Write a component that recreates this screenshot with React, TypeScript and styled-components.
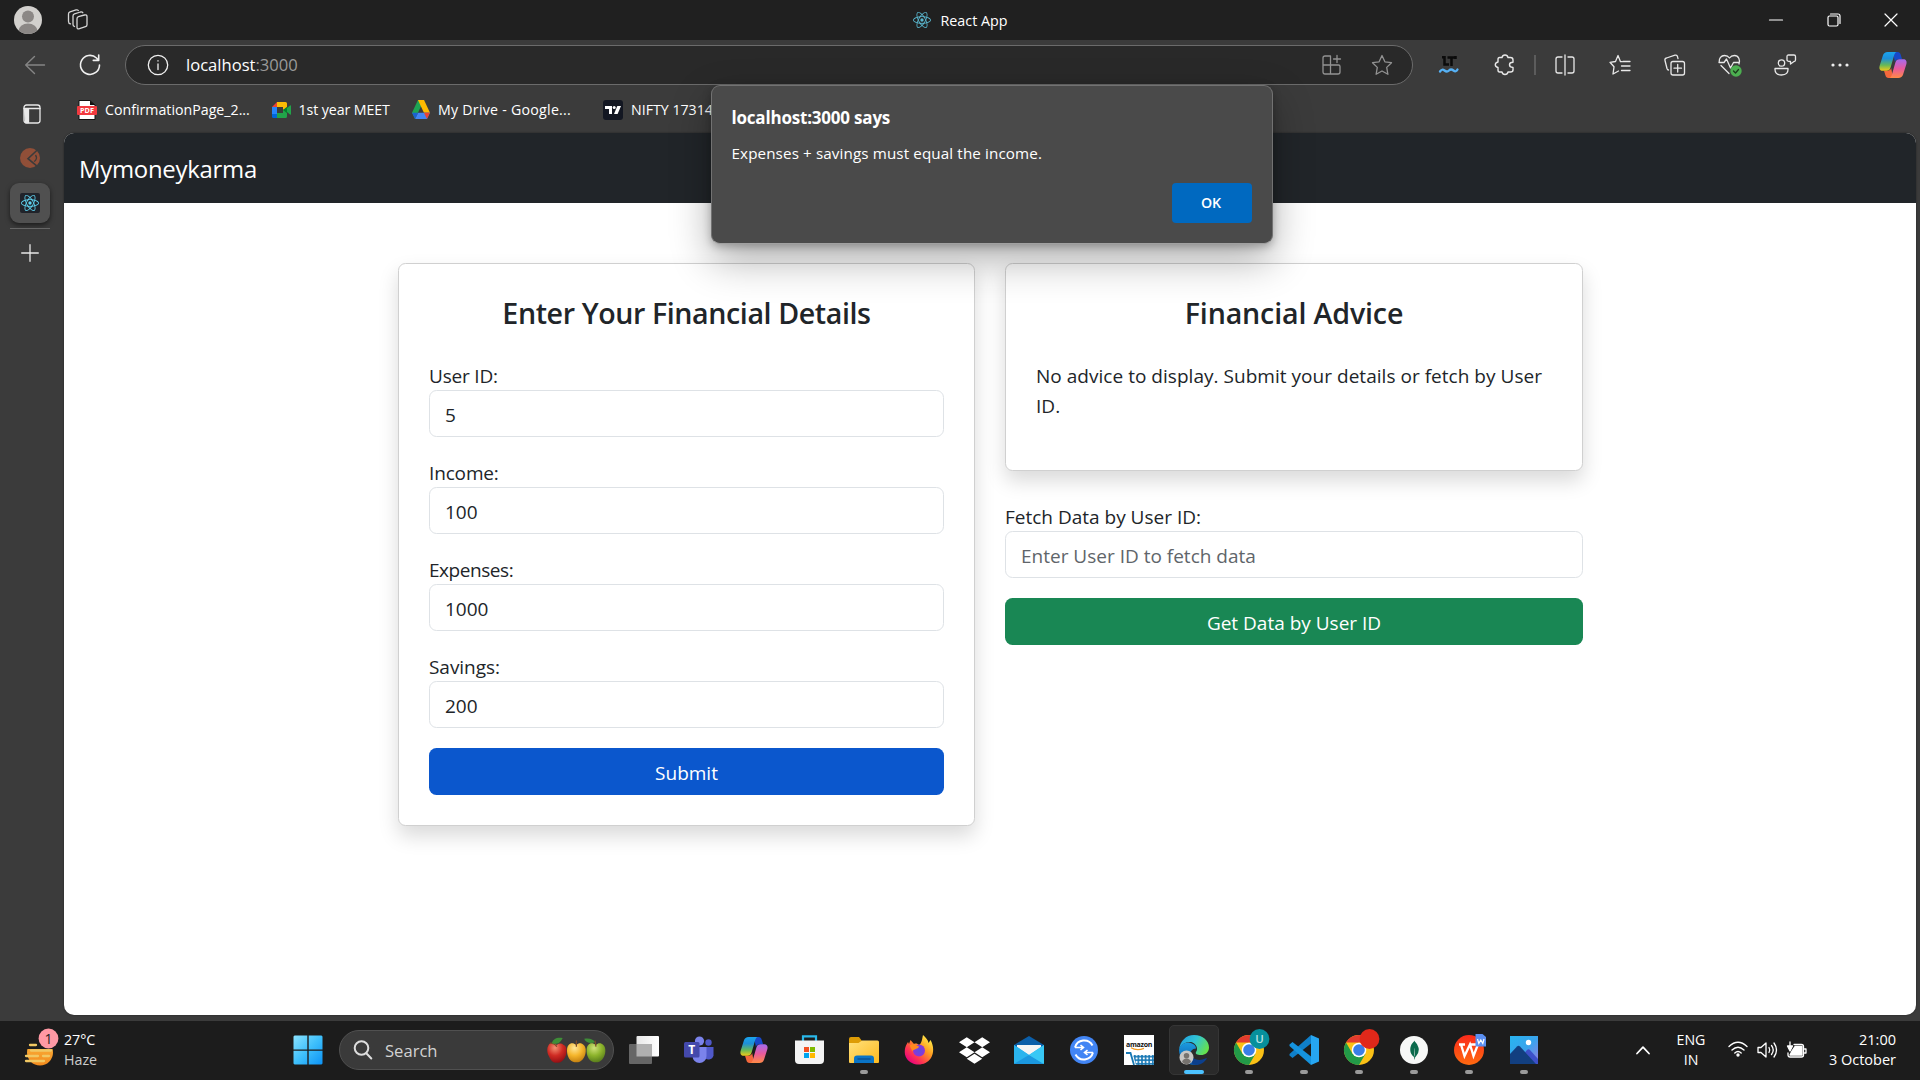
import React from "react";
import styled, { createGlobalStyle } from "styled-components";
import { SiReact, SiMongodb } from "react-icons/si";
import { FaDropbox } from "react-icons/fa";

const Global = createGlobalStyle`
  *, *::before, *::after { box-sizing: border-box; }
  html, body { margin: 0; padding: 0; overflow: hidden; background: #1c1c1c; }
  body { font-family: "Open Sans", "Noto Sans", sans-serif; color: #fff; }
  svg { display: block; flex: none; overflow: visible; }
  input, button { font-family: inherit; }
`;

/* ---------- window chrome ---------- */
const Screen = styled.div`
  width: 1920px; height: 1080px; display: flex; flex-direction: column; overflow: hidden;
`;
const Window = styled.div`
  position: relative; height: 1021px; display: flex; flex-direction: column; background: #3b3b3b;
`;
const TitleBar = styled.header`
  height: 40px; background: #202020; display: grid; grid-template-columns: 1fr auto 1fr; align-items: center;
`;
const TitleLeft = styled.div`display: flex; align-items: center; gap: 25px; padding-left: 14px;`;
const TabTitle = styled.div`
  display: flex; align-items: center; gap: 10px; font-size: 14.3px;
`;
const WindowButtons = styled.div`display: flex; justify-content: flex-end;`;
const WindowButton = styled.div`
  width: 57.5px; height: 40px; display: flex; align-items: center; justify-content: center;
`;
const Toolbar = styled.div`height: 50px; display: flex; align-items: center;`;
const NavButton = styled.div<{ $w: number }>`
  width: ${(p) => p.$w}px; display: flex; justify-content: center; align-items: center;
`;
const AddressBar = styled.div`
  margin-left: 14px; width: 1288px; height: 40px; border: 1px solid #6b6b6b; border-radius: 20px; background: #292929;
  display: flex; align-items: center; padding: 0 19px 0 21px;
`;
const Url = styled.div`
  margin-left: 17px; font-size: 16.6px; flex: 1; line-height: 24px;
  span { color: #9a9a9a; }
`;
const AddressActions = styled.div`display: flex; gap: 28px;`;
const Tools = styled.div`display: flex; align-items: center; margin-left: 8px;`;
const Divider = styled.div`width: 2px; height: 20px; background: #5c5c5c; margin: 0 1px;`;

const Bookmarks = styled.div`
  height: 43px; display: flex; align-items: center; padding: 0 0 4px 77px; font-size: 14.2px;
`;
const Bookmark = styled.div<{ $w: number; $track?: number }>`
  width: ${(p) => p.$w}px; display: flex; align-items: center; gap: 8px; white-space: nowrap;
  letter-spacing: ${(p) => p.$track ?? 0}px;
`;

const Body = styled.div`height: 888px; display: flex;`;
const Rail = styled.aside`
  width: 64px; margin-top: -33px; display: flex; flex-direction: column; align-items: center; padding-right: 4px;
`;
const RailItem = styled.div<{ $h: number; $active?: boolean; $top?: number; $left?: number }>`
  width: 40px; height: ${(p) => p.$h}px; display: flex; align-items: center; justify-content: center; border-radius: 9px;
  padding: ${(p) => p.$top ?? 0}px 0 0 ${(p) => p.$left ?? 0}px;
  ${(p) => p.$active && "background:#505050; box-shadow:0 2px 5px rgba(0,0,0,.55);"}
`;
const RailLine = styled.div`width: 40px; height: 1px; background: #666; margin: 5px 0 4px;`;
const ReactTile = styled.div`
  width: 20px; height: 20px; background: #20232a; border-radius: 2px; display: flex; align-items: center; justify-content: center;
`;

/* ---------- web page ---------- */
const Page = styled.main`
  width: 1851.5px; height: 882px; border-radius: 10px; overflow: hidden; background: #fff; color: #212529;
  font-size: 19px; line-height: 30px; box-shadow: 0 0 2px rgba(0,0,0,.5);
`;
const Navbar = styled.nav`
  height: 70px; background: #212529; color: #fff; display: flex; align-items: center; padding: 2px 15px 0;
  font-size: 23.9px; letter-spacing: -0.25px;
`;
const Columns = styled.div`
  display: grid; grid-template-columns: 577px 578px; column-gap: 30px; align-items: start; padding: 60px 0 0 334px;
`;
const Card = styled.section`
  border: 1px solid #d0d0d0; border-radius: 7.5px; padding: 30px; background: #fff; box-shadow: 0 10px 20px rgba(0,0,0,.15);
`;
const Heading = styled.h3<{ $track: number }>`
  margin: 0 0 30px; padding-top: 1px; height: 36px; font-size: 28.6px; line-height: 36px; font-weight: 600; text-align: center;
  letter-spacing: ${(p) => p.$track}px;
`;
const Field = styled.div`display: flex; flex-direction: column; margin-bottom: 20px;`;
const Label = styled.label<{ $track?: number }>`
  height: 30px; padding-top: 1px; letter-spacing: ${(p) => p.$track ?? -0.1}px;
`;
const Input = styled.input`
  height: 47px; border: 1px solid #dee2e6; border-radius: 7.5px; padding: 2px 15px 0; font-size: 19px; color: #212529;
  background: #fff; outline: none; width: 100%;
  &::placeholder { color: #60656a; opacity: 1; }
`;
const Action = styled.button<{ $color: string }>`
  width: 100%; height: 47px; border: 0; border-radius: 7.5px; background: ${(p) => p.$color}; color: #fff;
  font-size: 19px; padding: 2px 0 0; display: block;
`;
const Advice = styled.p`margin: 0 0 20px; height: 60px; padding-top: 1px; letter-spacing: 0.03px;`;
const Fetch = styled.div`margin-top: 30px;`;

/* ---------- alert ---------- */
const Alert = styled.div`
  position: absolute; left: 711px; top: 85px; width: 562px; height: 159px; border-radius: 9px; background: #4a4a4a;
  border: 1px solid #727272; border-bottom-color: #a0a0a0; box-shadow: 0 16px 40px rgba(0,0,0,.32), 0 3px 8px rgba(0,0,0,.25);
  padding: 20px 20px 19px 19.5px; display: flex; flex-direction: column;
`;
const AlertTitle = styled.div`font-size: 17px; font-weight: 700; line-height: 24px; letter-spacing: -0.2px;`;
const AlertText = styled.div`margin-top: 12px; font-size: 15.2px; line-height: 22px; letter-spacing: 0.12px;`;
const AlertButton = styled.button`
  align-self: flex-end; margin-top: 19px; width: 80px; height: 40px; border: 0; border-radius: 4px; background: #0069c0;
  color: #fff; font-size: 14.2px; font-weight: 600; padding: 0 2px 1px 0;
`;

/* ---------- taskbar ---------- */
const Taskbar = styled.footer`
  height: 59px; background: #1c1c1c; display: flex; align-items: center; padding-bottom: 1px;
`;
const Weather = styled.div`
  width: 280px; display: flex; align-items: center; gap: 7px; padding-left: 23px; font-size: 14.3px; line-height: 20px;
  letter-spacing: -0.05px;
  div div + div { color: #ccc; }
`;
const Start = styled.div`width: 59px; display: flex; justify-content: center; padding-right: 4px;`;
const Search = styled.div`
  width: 275px; height: 40px; border: 1px solid #505050; border-radius: 20px; background: #3a3a3a; display: flex;
  align-items: center; padding: 0 6px 0 13px; font-size: 16.6px; color: #d2d2d2;
  span { flex: 1; margin-left: 12px; }
`;
const Apps = styled.div`display: flex; margin-left: 2.5px; flex: 1;`;
const AppCell = styled.div`width: 55px; height: 58px; display: flex; justify-content: center; align-items: center;`;
const AppTile = styled.div<{ $state?: "running" | "active" }>`
  position: relative; width: 50px; height: 50px; border-radius: 5px; display: flex; align-items: center; justify-content: center;
  border: 1px solid ${(p) => (p.$state === "active" ? "#353535" : "transparent")};
  background: ${(p) => (p.$state === "active" ? "#2a2a2a" : "transparent")};
  &::after {
    content: ""; position: absolute; bottom: 0; height: 4px; border-radius: 2px;
    width: ${(p) => (p.$state === "active" ? 20 : p.$state ? 8 : 0)}px;
    background: ${(p) => (p.$state === "active" ? "#4cc2ff" : "#9a9a9a")};
  }
`;
const Tray = styled.div`
  display: flex; align-items: center; padding-right: 24px; font-size: 14.5px; line-height: 20px;
`;
const TrayLang = styled.div`width: 40px; text-align: center; margin-left: 20px; font-size: 14.2px;`;
const TrayIcons = styled.div`display: flex; gap: 9px; margin: 0 20px 0 17px;`;
const Clock = styled.div`text-align: right; width: 69px; white-space: nowrap;`;

/* ---------- icons ---------- */
type LineProps = { w?: number; h?: number; color?: string; sw?: number; children: React.ReactNode };
const Line = ({ w = 20, h = 20, color = "#e8e8e8", sw = 1.3, children }: LineProps) => (
  <svg width={w} height={h} viewBox={`0 0 ${w} ${h}`} fill="none" stroke={color} strokeWidth={sw} strokeLinecap="round" strokeLinejoin="round">
    {children}
  </svg>
);

const Avatar = ({ size = 28 }: { size?: number }) => (
  <svg width={size} height={size} viewBox="0 0 28 28">
    <clipPath id="face"><circle cx="14" cy="14" r="14" /></clipPath>
    <g clipPath="url(#face)">
      <rect width="28" height="28" fill="#d2d0cd" />
      <circle cx="14" cy="10.5" r="6" fill="#8b8785" />
      <ellipse cx="14" cy="25" rx="9.5" ry="7.5" fill="#8b8785" />
    </g>
  </svg>
);

const Copilot = ({ id, size = 28 }: { id: string; size?: number }) => (
  <svg width={size} height={size} viewBox="0 0 28 28">
    <defs>
      <linearGradient id={id + "a"} x1="0" y1="0" x2="0" y2="1">
        <stop offset="0" stopColor="#1aa4ee" /><stop offset=".35" stopColor="#1e8fd8" /><stop offset=".7" stopColor="#68b957" /><stop offset="1" stopColor="#f3cb18" />
      </linearGradient>
      <linearGradient id={id + "b"} x1="0" y1="0" x2="0" y2="1">
        <stop offset="0" stopColor="#a36bf0" /><stop offset=".5" stopColor="#e85a9e" /><stop offset="1" stopColor="#ff8a45" />
      </linearGradient>
    </defs>
    <path d="M14 1h4.600c1.700 0 2.600 1 3.100 2.700l1.400 4.600h-3.600c-2 0-3 .8-3.600 2.700z" fill="#1748c9" />
    <path d="M14 27H9.500c-1.700 0-2.600-1-3.100-2.700L5 19.700h3.600c2 0 3-.8 3.600-2.700z" fill="#f4683c" />
    <path d="M8.700 1h9.200c-1.500.3-2.200 1.400-2.700 3L11.600 16.500c-.7 2.300-2 3.300-4.200 3.300H3.700C1 19.800-.1 17.700.6 15L3.900 4.500C4.600 2.200 6.200 1 8.700 1z" fill={`url(#${id}a)`} />
    <path d="M19.300 27h-9.200c1.500-.3 2.200-1.400 2.700-3l3.600-12.500c.7-2.300 2-3.300 4.200-3.300h3.700c2.700 0 3.800 2.100 3.100 4.800l-3.300 10.500c-.7 2.300-2.300 3.500-4.800 3.500z" fill={`url(#${id}b)`} />
  </svg>
);

const PdfIcon = () => (
  <svg width="20" height="20" viewBox="0 0 20 20">
    <path d="M2 .5h11L18 5v14.500H2z" fill="#fff" stroke="#111" />
    <path d="M13 .5V5h5z" fill="#111" />
    <rect x="0" y="6" width="20" height="9" rx="1" fill="#f23a3f" />
    <text x="10" y="13.200" fontSize="7.200" fontWeight="700" textAnchor="middle" fill="#fff" fontFamily="Open Sans">PDF</text>
  </svg>
);
const MeetIcon = () => (
  <svg width="19" height="16" viewBox="0 0 19 16">
    <path d="M5 0v5H0z" fill="#ea4335" />
    <path d="M5 0h8.500Q15 0 15 1.500V6l-4 2V5H5z" fill="#fbbc04" />
    <path d="M0 5h5v7H0z" fill="#2684fc" />
    <path d="M0 12h5v4H1.500Q0 16 0 14.500z" fill="#0066da" />
    <path d="M5 11h6V8l4-2 3-2.500q1-.6 1 .5v8q0 1.100-1 .5L15 10v4.500q0 1.500-1.500 1.500H5z" fill="#22a44a" />
    <path d="M11 8l4-3.300v6.600z" fill="#00832d" />
  </svg>
);
const DriveIcon = () => (
  <svg width="18" height="19" viewBox="0 0 19 17" preserveAspectRatio="none">
    <path d="M6.300 0h6.400L9.500 5.600 3.200 17 0 11.300z" fill="#1ea453" />
    <path d="M6.300 0h6.400L19 11.300h-6.400z" fill="#ffba00" />
    <path d="M3.200 17L6.400 11.300H19L15.800 17z" fill="#4285f4" />
    <path d="M12.600 11.300H19L15.800 17z" fill="#ea4335" />
    <path d="M0 11.300h6.400L3.200 17z" fill="#1c61d2" />
  </svg>
);
const TvIcon = () => (
  <svg width="20" height="20" viewBox="0 0 20 20">
    <rect width="20" height="20" rx="3" fill="#131722" />
    <path d="M2 6h7v8H6V9H2z" fill="#fff" /><circle cx="11.200" cy="7.500" r="1.500" fill="#fff" /><path d="M14.300 6H18l-3.400 8H11z" fill="#fff" />
  </svg>
);
const KiteIcon = () => (
  <svg width="20" height="20" viewBox="0 0 20 20">
    <circle cx="10" cy="10" r="10" fill="#914f38" />
    <path d="M17.300 2L8 10.700l9 7.500" fill="none" stroke="#3b3b3b" strokeWidth="1.600" />
    <path d="M15.500 7q2 2.500 0 5.500l-1.500 1" fill="none" stroke="#3b3b3b" strokeWidth="1.300" />
  </svg>
);
const LtIcon = () => (
  <svg width="20" height="18" viewBox="0 0 20 18">
    <path d="M3 1.300h2.500V8.500h4.500M8.500 1.500h8M16.500 0v3M12.500 1.500V10" fill="none" stroke="#0b0b0b" strokeWidth="2.500" />
    <path d="M1 15.500q2-3 4.500-1t4.500 0 4.500 0T18.500 13.500" fill="none" stroke="#56b1f5" strokeWidth="2.300" strokeLinecap="round" />
  </svg>
);
const WeatherIcon = () => (
  <svg width="34" height="38" viewBox="0 0 34 38">
    <defs><linearGradient id="sun" x1="0" y1="0" x2="0" y2="1"><stop offset="0" stopColor="#fcb940" /><stop offset="1" stopColor="#f28a1d" /></linearGradient></defs>
    <circle cx="17" cy="21.500" r="13" fill="url(#sun)" />
    <path d="M0 0h34v18H0z" fill="#1c1c1c" />
    <path d="M7 14h6M8 19.500h20M3 25h12M20 25h6M3 30h18" stroke="#f1c863" strokeWidth="2.300" strokeLinecap="round" />
    <circle cx="25.500" cy="7.500" r="9.900" fill="#ff99a4" />
    <text x="25.500" y="12.500" fontSize="14" textAnchor="middle" fill="#222" fontFamily="Open Sans">1</text>
  </svg>
);
const WindowsIcon = () => (
  <svg width="30" height="30" viewBox="0 0 30 30">
    <defs><linearGradient id="win" x1="0" y1="0" x2="1" y2="1"><stop offset="0" stopColor="#8be3ff" /><stop offset=".5" stopColor="#3fc0fb" /><stop offset="1" stopColor="#0c92f5" /></linearGradient></defs>
    <path d="M1.500 .5h12.800v14H.5V1.500zM15.700.5H28.500l1 1v13H15.700zM.5 15.800h13.800v13.700H1.500L.5 28.500zM15.700 15.800h13.800v12.700l-1 1H15.700z" fill="url(#win)" />
  </svg>
);
const Fruit = () => (
  <svg width="62" height="34" viewBox="0 0 62 34">
    <defs>
      {[["r", "#f49173", "#cf2b23", "#8d0c12"], ["y", "#ffe79a", "#f5b62c", "#c07c0e"], ["g", "#cfe27c", "#8db42c", "#54781a"]].map(([k, a, b, c]) => (
        <radialGradient key={k} id={"fruit" + k} cx=".4" cy=".25" r=".8"><stop offset="0" stopColor={a} /><stop offset=".5" stopColor={b} /><stop offset="1" stopColor={c} /></radialGradient>
      ))}
    </defs>
    <g transform="translate(1 4) scale(.98 .88)">
      <path d="M11 9c-3-4-8-3-9 2 0-1-2 5 1 11 2 6 5 8 8 7 4 1 7-2 9-7 2-7 1-12-2-13-2-2-5-2-7 0z" fill="url(#fruitr)" />
      <path d="M31 9c-5-4-9-1-9.500 5s2 13 6 14c2 .8 5 .8 7 0 4-2 6.500-8 6-14s-6-9-9.500-5z" fill="url(#fruity)" />
      <path d="M51 9c-5-4-9-1-9.500 5s2 13 6 14c2 .8 5 .8 7 0 4-2 6.500-8 6-14s-6-9-9.500-5z" fill="url(#fruitg)" />
      <path d="M11 11c-1-2-4-4-7-4M31 11V4M51 11l-1-7" stroke="#7d4a28" strokeWidth="1.300" fill="none" />
      <path d="M6 7c1-5 5-7 11-6-2 5-5 8-11 6zM50 6c-5 2-10 0-11-4 5-1 9 0 11 4z" fill="#3f8d38" />
    </g>
  </svg>
);
const TaskViewIcon = () => (
  <svg width="30" height="28" viewBox="0 0 30 28">
    <defs><linearGradient id="tv1"><stop offset="0" stopColor="#e8e8e8" /><stop offset="1" stopColor="#fff" /></linearGradient></defs>
    <rect x="7.500" width="22.500" height="20.500" rx="1" fill="url(#tv1)" />
    <rect y="8" width="23" height="20" rx="1" fill="#666" />
    <path d="M7.500 8H23v12.500H7.500z" fill="#b0b0b0" />
  </svg>
);
const TeamsIcon = () => (
  <svg width="30" height="28" viewBox="0 0 30 28">
    <circle cx="24.500" cy="6.500" r="3.200" fill="#5059c9" /><path d="M20 11h9.500v8.500a5 5 0 01-9.500 1z" fill="#5059c9" />
    <circle cx="15.500" cy="5" r="4.600" fill="#7b83eb" /><path d="M8.500 11h14v9a7 7 0 01-14 0z" fill="#7b83eb" />
    <rect y="6" width="15.500" height="15.500" rx="1.500" fill="#4449ac" />
    <text x="7.700" y="18" fontSize="12" fontWeight="700" textAnchor="middle" fill="#fff" fontFamily="Open Sans">T</text>
  </svg>
);
const StoreIcon = () => (
  <svg width="29" height="30" viewBox="0 0 29 30">
    <path d="M8 6V1.300h13V6" fill="none" stroke="#29b8ea" strokeWidth="2.200" />
    <path d="M0 5.500h29V25q0 4-4 4H4q-4 0-4-4z" fill="#f4f4f4" />
    <path d="M9 12h5v5H9z" fill="#f25022" /><path d="M15 12h5v5h-5z" fill="#7fba00" /><path d="M9 18h5v5H9z" fill="#00a4ef" /><path d="M15 18h5v5h-5z" fill="#ffb900" />
  </svg>
);
const FolderIcon = () => (
  <svg width="30" height="28" viewBox="0 0 30 28">
    <defs><linearGradient id="fold" x2="1" y2="1"><stop offset="0" stopColor="#ffe17c" /><stop offset="1" stopColor="#fdba1f" /></linearGradient></defs>
    <path d="M0 3q0-2 2-2h8l3 4v6H0z" fill="#dd9c06" />
    <path d="M0 7h9.500L13 4.500h15.500Q30 4.500 30 6v20q0 1-1 1H1q-1 0-1-1z" fill="url(#fold)" />
    <path d="M5 27v-4.500q0-3 3-3h14q3 0 3 3V27z" fill="#0a74c6" /><path d="M8.500 23h13" stroke="#0a4f91" strokeWidth="1.400" />
  </svg>
);
const FirefoxIcon = () => (
  <svg width="30" height="30" viewBox="0 0 30 30">
    <defs>
      <linearGradient id="ff" x1=".9" y1=".1" x2=".2" y2=".9"><stop offset="0" stopColor="#fff04a" /><stop offset=".4" stopColor="#ff9a20" /><stop offset=".75" stopColor="#ff3750" /><stop offset="1" stopColor="#eb0878" /></linearGradient>
      <radialGradient id="fg"><stop offset="0" stopColor="#5b4fe0" /><stop offset="1" stopColor="#8f35d8" /></radialGradient>
    </defs>
    <path d="M19 0c4 4 5 5 5.500 8l2-3C30 11 30 18 27 23c-6 9-19 8-24 1C-1 18 1 11 4 7l1 2 1.500-4L10 9c2-1 4 0 5 1 3-2 3-6 4-10z" fill="url(#ff)" />
    <circle cx="15" cy="15.500" r="6" fill="url(#fg)" />
    <path d="M6 10c3-2 6 0 9 1.500-1 3-5 2-7 5 0-3-2-3-2-6.500z" fill="#ff8b1f" />
  </svg>
);
const MailIcon = () => (
  <svg width="30" height="28" viewBox="0 0 30 28">
    <path d="M0 9L15 0l15 9v8H0z" fill="#0b5ea8" /><path d="M3 9h24v10H3z" fill="#f4f4f4" />
    <path d="M0 9l15 10L30 9v17.500Q30 28 28.500 28h-27Q0 28 0 26.500z" fill="#27b0ee" /><path d="M0 28L15 19 0 9z" fill="#2ab4ee" /><path d="M15 19L30 28H0z" fill="#1b98e0" /><path d="M15 19L30 9v19z" fill="#38c8f5" />
  </svg>
);
const SyncIcon = () => (
  <svg width="28" height="28" viewBox="0 0 28 28">
    <circle cx="14" cy="14" r="14" fill="#4285f4" />
    <path d="M22.500 9.500A9.500 9.500 0 005 11.500M5.500 18.500A9.500 9.500 0 0023 16.500" fill="none" stroke="#fff" strokeWidth="2" />
    <path d="M5 11.500h8M23 16.500h-8M10.500 9l3 2.500-3 2.500M17.500 14l-3 2.500 3 2.500" fill="none" stroke="#fff" strokeWidth="1.600" />
  </svg>
);
const AmazonIcon = () => (
  <svg width="30" height="30" viewBox="0 0 30 30">
    <defs><pattern id="mesh" width="3.600" height="3.600" patternUnits="userSpaceOnUse"><rect width="3.600" height="3.600" fill="#1878b4" /><circle cx="1.800" cy="1.800" r="1.150" fill="#fff" /></pattern></defs>
    <path d="M0 0h30v30H0z" fill="#fff" />
    <text x="15" y="11.500" fontSize="7" fontWeight="700" textAnchor="middle" letterSpacing="-0.25" fill="#111" fontFamily="Open Sans">amazon</text>
    <path d="M7 12.800q6 3.500 13 .5" stroke="#f29b22" strokeWidth="1.300" fill="none" />
    <path d="M9 20h21v10H12z" fill="url(#mesh)" /><path d="M2 18h4.500L10 30" fill="none" stroke="#1878b4" strokeWidth="1.800" />
  </svg>
);
const EdgeIcon = () => (
  <svg width="30" height="30" viewBox="0 0 30 30">
    <defs>
      <linearGradient id="e1" x1="0" y1=".2" x2="1" y2=".6"><stop offset="0" stopColor="#1f9ee0" /><stop offset=".5" stopColor="#31c5d6" /><stop offset="1" stopColor="#67e34a" /></linearGradient>
      <linearGradient id="e2" x1="0" y1="0" x2="0" y2="1"><stop offset="0" stopColor="#1b9be0" /><stop offset="1" stopColor="#0b58a8" /></linearGradient>
    </defs>
    <path d="M0 15C1 6 7 0 15 0c9 0 15 6 15 12.500 0 5-4 7.500-8 7.500-4 0-6-1-5-3 2-2 1.500-7-3.500-9.500C8 6 2 9 0 15z" fill="url(#e1)" />
    <path d="M0 15c1-6 8-9 13-6.500 3 1 4 3.500 4 5-4 0-6 3-5.500 7 .5 5 4.500 8 8.500 9C9 32 0 24 0 15z" fill="url(#e2)" />
    <path d="M11.500 17c0 6 6 9 12 7.500 2-.5 3.500-1.500 4.500-1.500-3 6-9 8-14 6.500-3-3-4.500-9-2.500-12.500z" fill="#0c3f8c" />
    <g transform="translate(.5 15.500) scale(.5)">
      <circle cx="14" cy="14" r="14" fill="#c8c6c4" /><circle cx="14" cy="10.500" r="5.500" fill="#77736f" /><path d="M5 23q2-7 9-7t9 7q-9 9-18 0z" fill="#77736f" />
    </g>
  </svg>
);
const ChromeIcon = ({ badge, letter }: { badge: string; letter?: string }) => (
  <svg width="30" height="30" viewBox="0 0 30 30">
    <circle cx="15" cy="15" r="15" fill="#fbc116" />
    <path d="M2 7.500A15 15 0 0128 7.500H15z" fill="#e33b2e" />
    <path d="M2 7.500A15 15 0 0015 30l6.500-11.300L8.500 18.700z" fill="#229a48" />
    <circle cx="15" cy="15" r="7.300" fill="#fff" /><circle cx="15" cy="15" r="5.800" fill="#3a7ee8" />
    <circle cx="25.500" cy="4" r="9.900" fill={badge} />
    {letter && <text x="25.500" y="8.300" fontSize="11.500" fontWeight="600" textAnchor="middle" fill="#b9e2e4" fontFamily="Open Sans">{letter}</text>}
  </svg>
);
const CodeIcon = () => (
  <svg width="30" height="30" viewBox="0 0 30 30">
    <path d="M22 0v8.500L3.500 23l-3-2.500V19z" fill="#0f7fc9" /><path d="M22 30v-8.500L3.500 7l-3 2.500V11z" fill="#1593de" />
    <path d="M22 0l8 3.500v23L22 30z" fill="#26a6f2" />
  </svg>
);
const MongoIcon = () => (
  <svg width="28" height="28" viewBox="0 0 28 28">
    <circle cx="14" cy="14" r="14" fill="#f7f8f7" /><g transform="translate(5 4.500)"><SiMongodb size={19} color="#0b6a4c" /></g>
  </svg>
);
const WpsIcon = () => (
  <svg width="32" height="32" viewBox="0 0 32 32">
    <defs><linearGradient id="wps" x2="0" y2="1"><stop offset="0" stopColor="#fa2a1b" /><stop offset="1" stopColor="#ff6a10" /></linearGradient></defs>
    <circle cx="16" cy="16" r="15" fill="url(#wps)" />
    <path d="M6 10.500h6M8 10.500l3.500 11.500L17 10.500l3.500 11.500L25 10.500h-8" fill="none" stroke="#fff" strokeWidth="2.300" />
    <path d="M22.500 0h7l3.500 3v9.500h-10.500z" fill="#5b8ff0" /><path d="M24.500 5l1.300 4.500L27.800 6l2 3.500L31 5" fill="none" stroke="#fff" strokeWidth="1.200" />
  </svg>
);
const PhotosIcon = () => (
  <svg width="28" height="28" viewBox="0 0 28 28">
    <defs><linearGradient id="ph" x2="1" y2="1"><stop offset="0" stopColor="#28b4f0" /><stop offset=".5" stopColor="#38a4ec" /><stop offset="1" stopColor="#9a7ae0" /></linearGradient></defs>
    <path d="M0 0h28v28H0z" fill="url(#ph)" /><path d="M12 20l5-6q1.500-1.500 3 0l8 9v5H12z" fill="#3d50c8" />
    <path d="M0 18l7-7.500q1.500-1.500 3 0L26 28H0z" fill="#123f80" /><circle cx="18.500" cy="6.500" r="2.700" fill="#fff" />
  </svg>
);

const apps: { icon: React.ReactNode; state?: "running" | "active" }[] = [
  { icon: <TaskViewIcon /> },
  { icon: <TeamsIcon /> },
  { icon: <Copilot id="task" size={28} /> },
  { icon: <StoreIcon /> },
  { icon: <FolderIcon />, state: "running" },
  { icon: <FirefoxIcon /> },
  { icon: <FaDropbox size={31} color="#fff" /> },
  { icon: <MailIcon /> },
  { icon: <SyncIcon /> },
  { icon: <AmazonIcon /> },
  { icon: <EdgeIcon />, state: "active" },
  { icon: <ChromeIcon badge="#07909c" letter="U" />, state: "running" },
  { icon: <CodeIcon />, state: "running" },
  { icon: <ChromeIcon badge="#e0281a" />, state: "running" },
  { icon: <MongoIcon />, state: "running" },
  { icon: <WpsIcon />, state: "running" },
  { icon: <PhotosIcon />, state: "running" },
];

const fields: { label: string; value: string; track: number }[] = [
  { label: "User ID:", value: "5", track: -0.2 },
  { label: "Income:", value: "100", track: -0.15 },
  { label: "Expenses:", value: "1000", track: -0.45 },
  { label: "Savings:", value: "200", track: -0.05 },
];

export default function App() {
  return (
    <Screen>
      <Global />
      <Window>
        <TitleBar>
          <TitleLeft>
            <Avatar />
            <Line w={22} h={22} color="#d6d6d6">
              <path d="M11.500 7.700l6-1.700q2.500-.6 2.500 1.700v8q0 1.500-1.500 2l-6 2q-2.500.8-2.500-1.500v-8.500q0-1.500 1.500-2z" />
              <path d="M7.500 17.500Q6 17 6 15.500V7q0-1.700 1.500-2.200l6-1.800q1.600-.4 2.300.7M3.500 14.800Q1.500 14.500 1.500 12.500V5Q1.500 3.300 3 2.800l6-1.900q1.600-.4 2.300.6" />
            </Line>
          </TitleLeft>
          <TabTitle><SiReact size={18} color="#5ab8d0" /><span>React App</span></TabTitle>
          <WindowButtons>
            <WindowButton><Line w={14} h={14} color="#fff" sw={1.2}><path d="M.5 7h13" /></Line></WindowButton>
            <WindowButton><Line w={14} h={14} color="#fff" sw={1.2}><rect x="1" y="3" width="10" height="10" rx="1.500" /><path d="M3.500 1H11q2 0 2 2v7.500" /></Line></WindowButton>
            <WindowButton><Line w={14} h={14} color="#fff" sw={1.2}><path d="M1 1l12 12M13 1L1 13" /></Line></WindowButton>
          </WindowButtons>
        </TitleBar>

        <Toolbar>
          <NavButton $w={69}><Line w={20} h={20} color="#858585" sw={1.4}><path d="M19.500 10H.7M9.500 1.500L.7 10l8.800 8.500" /></Line></NavButton>
          <NavButton $w={42}><Line w={22} h={22} color="#f0f0f0" sw={1.6}><path d="M20.500 11a9.500 9.500 0 11-3-7l2 2.200M19.700 1v5.400h-5.400" /></Line></NavButton>
          <AddressBar>
            <Line w={22} h={22} color="#f0f0f0"><circle cx="11" cy="11" r="9.700" /><path d="M11 10v5.500M11 6.700v.3" /></Line>
            <Url>localhost<span>:3000</span></Url>
            <AddressActions>
              <Line w={22} h={22} color="#929292"><path d="M2 4q0-2 2-2h5.500v18H4q-2 0-2-2zM2 11h15.500q1.500 0 1.500 1.500V18q0 2-2 2H9.500M16 1.500v7M12.500 5h7" /></Line>
              <Line w={22} h={22} color="#929292"><path d="M11 1.500l2.900 6.300 6.600.9-4.800 4.700 1.200 6.900L11 17l-5.900 3.300 1.200-6.900L1.500 8.700l6.600-.9z" /></Line>
            </AddressActions>
          </AddressBar>
          <Tools>
            <NavButton $w={56}><LtIcon /></NavButton>
            <NavButton $w={56}><Line w={22} h={22} sw={1.4}><path d="M5.500 3.500H8Q8.500 1 11 1t3 2.500h2.500q2.500 0 2.500 2.500v2.300q-3.500 0-3.500 2.500t3.500 2.700v2.500q0 2-2.500 2H14Q13.500 20.500 11 20.500T8 18H5.500Q4 18 4 16v-2.500Q1.300 13 1.300 10.800T4 8V5.500q0-2 1.500-2z" /></Line></NavButton>
            <Divider />
            <NavButton $w={55}><Line w={22} h={22}><path d="M11 1v20M8 3H4Q2 3 2 5v12q0 2 2 2h4M14 3h4q2 0 2 2v12q0 2-2 2h-4" /></Line></NavButton>
            <NavButton $w={55.5}><Line w={22} h={22}><path d="M13 7.700h-1.500L9 1.500 6.500 7.500l-5.500.8 4 4.500-1 7.200 5.500-3M14 7.500h7M12.500 12H21M12.500 16.500H21" /></Line></NavButton>
            <NavButton $w={55}><Line w={22} h={22}><path d="M4.500 16Q3.500 16 3 14.500L1 6.500Q.5 4.500 2.500 4L11 1.200q2-.5 2.500 1.500l.5 2" /><rect x="7" y="7.500" width="13.500" height="13.500" rx="2" /><path d="M13.700 10.500v7.500M10 14.200h7.500" /></Line></NavButton>
            <NavButton $w={55}>
              <Line w={24} h={24}><path d="M11 20.500L3 12.500M21 11c1.500-4-.5-8.500-4.500-8.500-2.500 0-4 1-5 2.500C10.500 3.500 9 2.500 6.500 2.500 3 2.500 1 5.500 1.200 8.700M1 9.500h5L8.500 6l4 9 3-5.500h5" /><circle cx="18" cy="18" r="5.700" fill="#4caf50" stroke="none" /><path d="M15.500 18l2 2 3-3.500" stroke="#1c3a1d" /></Line>
            </NavButton>
            <NavButton $w={55}><Line w={22} h={22}><circle cx="7.500" cy="9" r="3.200" /><path d="M1 14.500h13q.5 6.500-6.500 6.500T1 14.500zM13 2.500Q13 1 14.500 1H20q1.500 0 1.500 1.500V6q0 1.500-1.500 1.500L16.500 10V7.500Q13 7.500 13 6z" /></Line></NavButton>
            <NavButton $w={55}><svg width="18" height="4" viewBox="0 0 18 4"><circle cx="2" cy="2" r="1.600" fill="#eee" /><circle cx="9" cy="2" r="1.600" fill="#eee" /><circle cx="16" cy="2" r="1.600" fill="#eee" /></svg></NavButton>
            <NavButton $w={50}><Copilot id="side" size={28} /></NavButton>
          </Tools>
        </Toolbar>

        <Bookmarks>
          <Bookmark $w={194.500}><PdfIcon />ConfirmationPage_2...</Bookmark>
          <Bookmark $w={140.500} $track={-0.08}><MeetIcon />1st year MEET</Bookmark>
          <Bookmark $w={191} $track={0.25}><DriveIcon />My Drive - Google...</Bookmark>
          <Bookmark $w={120}><TvIcon />NIFTY 17314</Bookmark>
        </Bookmarks>

        <Body>
          <Rail>
            <RailItem $h={28} $left={3}><Line w={20} h={22}><rect x="2" y="2" width="16" height="18" rx="2.500" /><path d="M2 5.500h16" /><path d="M2.500 6h4v13.500h-3z" fill="#e8e8e8" /></Line></RailItem>
            <RailItem $h={55} $top={5}><KiteIcon /></RailItem>
            <RailItem $h={40} $active><ReactTile><SiReact size={18} color="#5fd3f0" /></ReactTile></RailItem>
            <RailLine />
            <RailItem $h={40}><Line w={18} h={18}><path d="M9 .7v16.600M.7 9h16.600" /></Line></RailItem>
          </Rail>
          <Page>
            <Navbar>Mymoneykarma</Navbar>
            <Columns>
              <Card>
                <Heading $track={-0.4}>Enter Your Financial Details</Heading>
                {fields.map((f) => (
                  <Field key={f.label}>
                    <Label $track={f.track}>{f.label}</Label>
                    <Input defaultValue={f.value} />
                  </Field>
                ))}
                <Action $color="#0b57cd">Submit</Action>
              </Card>
              <div>
                <Card>
                  <Heading $track={-0.15}>Financial Advice</Heading>
                  <Advice>No advice to display. Submit your details or fetch by User ID.</Advice>
                </Card>
                <Fetch>
                  <Field>
                    <Label $track={0}>Fetch Data by User ID:</Label>
                    <Input placeholder="Enter User ID to fetch data" />
                  </Field>
                  <Action $color="#198754">Get Data by User ID</Action>
                </Fetch>
              </div>
            </Columns>
          </Page>
        </Body>

        <Alert role="alertdialog">
          <AlertTitle>localhost:3000 says</AlertTitle>
          <AlertText>Expenses + savings must equal the income.</AlertText>
          <AlertButton>OK</AlertButton>
        </Alert>
      </Window>

      <Taskbar>
        <Weather>
          <WeatherIcon />
          <div><div>27°C</div><div>Haze</div></div>
        </Weather>
        <Start><WindowsIcon /></Start>
        <Search>
          <Line w={20} h={20} color="#ddd" sw={2}><circle cx="8.500" cy="8" r="6.800" /><path d="M13.300 13.200l5 5.300" /></Line>
          <span>Search</span>
          <Fruit />
        </Search>
        <Apps>
          {apps.map((app, i) => (
            <AppCell key={i}><AppTile $state={app.state}>{app.icon}</AppTile></AppCell>
          ))}
        </Apps>
        <Tray>
          <Line w={16} h={10} color="#fff" sw={1.8}><path d="M2 8.500L8 2.200l6 6.300" /></Line>
          <TrayLang><div>ENG</div><div>IN</div></TrayLang>
          <TrayIcons>
            <Line w={20} h={16} color="#fff" sw={1.4}><path d="M1 5.500Q10-3 19 5.500M4 9q6-5.500 12 0M6.800 12q3.200-3 6.400 0" /><circle cx="10" cy="14" r="1" fill="#fff" /></Line>
            <Line w={20} h={18} color="#fff" sw={1.3}><path d="M1 6.500h3L9 2v14l-5-4.500H1zM12 6.500q1.500 2.500 0 5M14.500 4.500q3.500 4.500 0 9M17 2q5 7 0 14" /></Line>
            <Line w={21} h={18} color="#fff" sw={1.3}><path d="M8 3.500h7.500q2 0 2 2V14q0 2-2 2H4q-2 0-2-2v-2" /><path d="M6 10l3-4.500h7V14H4z" fill="#fff" /><path d="M18.500 8h1.500v4h-1.500" /><path d="M4 1v3.500M1.500 5h5L4 10z" fill="#fff" /></Line>
          </TrayIcons>
          <Clock><div>21:00</div><div>3 October</div></Clock>
        </Tray>
      </Taskbar>
    </Screen>
  );
}
